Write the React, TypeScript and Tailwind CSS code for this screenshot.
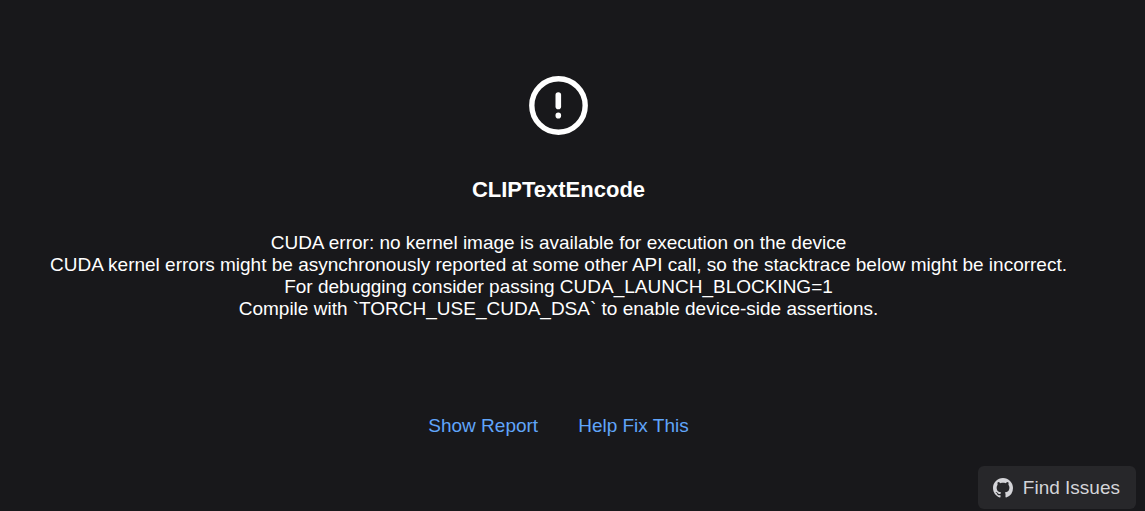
import React from 'react';

const errorLines = [
  'CUDA error: no kernel image is available for execution on the device',
  'CUDA kernel errors might be asynchronously reported at some other API call, so the stacktrace below might be incorrect.',
  'For debugging consider passing CUDA_LAUNCH_BLOCKING=1',
  'Compile with `TORCH_USE_CUDA_DSA` to enable device-side assertions.',
];

const ErrorIcon: React.FC = () => (
  <svg className="size-[59px]" viewBox="0 0 59 59" fill="none" stroke="currentColor" strokeLinecap="round" aria-hidden="true">
    <circle cx="29.5" cy="29.5" r="26.7" strokeWidth="5.4" />
    <path d="M29.3 19v11.4" strokeWidth="5.6" />
    <path d="M29.3 39.2v.6" strokeWidth="5.6" />
  </svg>
);

const GithubIcon: React.FC = () => (
  <svg className="size-5" viewBox="0 0 16 16" fill="currentColor" aria-hidden="true">
    <path d="M8 0C3.58 0 0 3.58 0 8c0 3.54 2.29 6.53 5.47 7.59.4.07.55-.17.55-.38 0-.19-.01-.82-.01-1.49-2.01.37-2.53-.49-2.69-.94-.09-.23-.48-.94-.82-1.13-.28-.15-.68-.52-.01-.53.63-.01 1.08.58 1.23.82.72 1.21 1.87.87 2.33.66.07-.52.28-.87.51-1.07-1.78-.2-3.64-.89-3.64-3.95 0-.87.31-1.59.82-2.15-.08-.2-.36-1.02.08-2.12 0 0 .67-.21 2.2.82.64-.18 1.32-.27 2-.27s1.36.09 2 .27c1.53-1.04 2.2-.82 2.2-.82.44 1.1.16 1.92.08 2.12.51.56.82 1.27.82 2.15 0 3.07-1.87 3.75-3.65 3.95.29.25.54.73.54 1.48 0 1.07-.01 1.93-.01 2.2 0 .21.15.46.55.38A8.01 8.01 0 0 0 16 8c0-4.42-3.58-8-8-8z" />
  </svg>
);

export default function App() {
  return (
    <main className="flex min-h-screen flex-col bg-[#18181b] pt-[76px] font-['Liberation_Sans',Arial,sans-serif] text-[19px] leading-[22px] text-white">
      <div className="flex flex-col items-center pr-7 text-center">
        <ErrorIcon />
        <h1 className="mt-[42px] text-[22px] leading-[26px] font-bold">CLIPTextEncode</h1>
        <p className="mt-[29px]">
          {errorLines.map((line) => (
            <span key={line} className="block">{line}</span>
          ))}
        </p>
        <div className="mt-[87px] flex gap-2 text-[#60a5fa]">
          <button type="button" className="px-4 py-2">Show Report</button>
          <button type="button" className="px-4 py-2">Help Fix This</button>
        </div>
      </div>
      <div className="mt-auto flex justify-end pt-4 pr-[9px] pb-[2px]">
        <button type="button" className="flex min-h-[43px] items-center gap-[10px] rounded-md bg-[#27272a] pr-4 pl-[15px] text-[#d4d4d8]">
          <GithubIcon />
          Find Issues
        </button>
      </div>
    </main>
  );
}
